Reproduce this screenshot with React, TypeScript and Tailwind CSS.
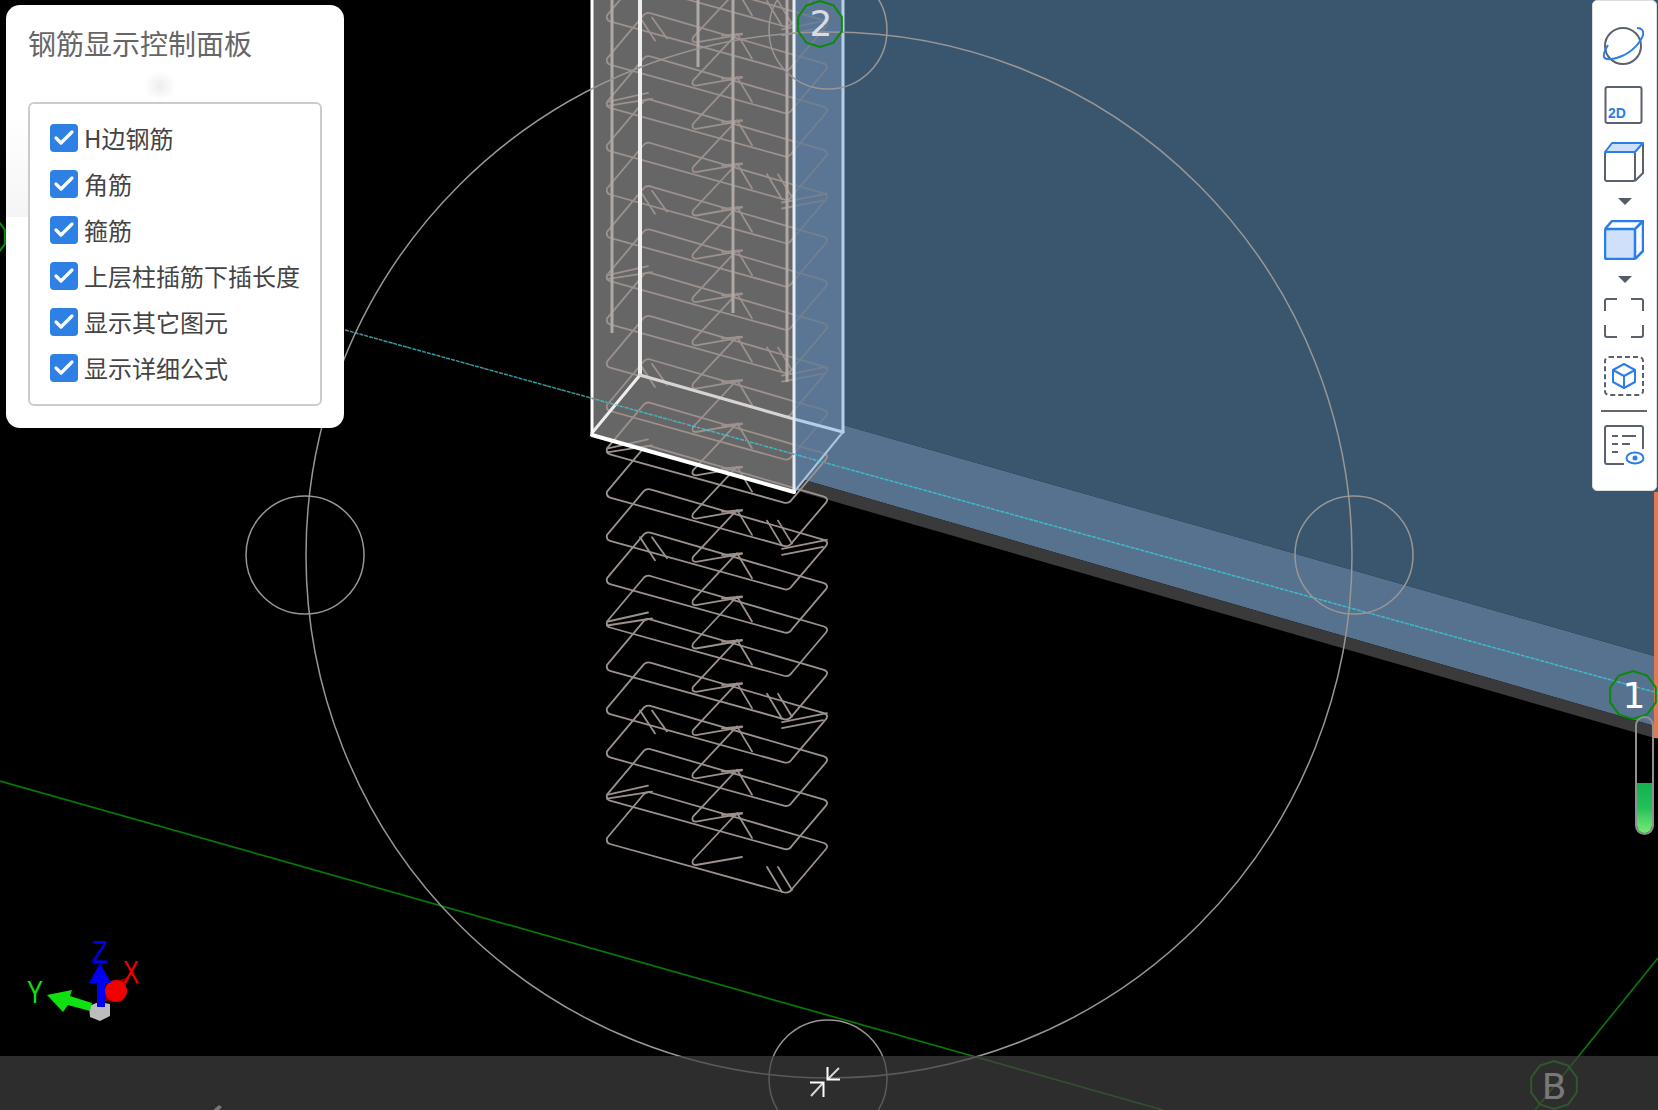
import { Check } from 'lucide-react';

const panelRows = ['H边钢筋', '角筋', '箍筋', '上层柱插筋下插长度', '显示其它图元', '显示详细公式'];

const GREY = '#5a6170';
const BLUE = '#2b7de9';
const HOOP_COLOR = '#9c918d';
const HOOP_PITCH = 43.3;

// hooks repeat every 4 hoops, counted from the bottom one
const hookPaths = [
  'M767 867L782 892M778 867L792 890',
  'M608 838L648 829M607 842L652 835',
  'M640 797L655 820M652 797L667 818',
  'M782 852L827 843M782 858L823 850',
];

const hoopIndexes = Array.from({ length: 22 }, (_, i) => i);

const decagon = (cx: number, cy: number, r: number) =>
  Array.from({ length: 10 }, (_, i) => {
    const a = (Math.PI / 5) * i - Math.PI / 2;
    return `${cx + r * Math.cos(a)},${cy + r * Math.sin(a)}`;
  }).join(' ');

const Hoop = ({ index }: { index: number }) => (
  <g transform={`translate(0 ${-HOOP_PITCH * index})`}>
    <path d="M607 838L644 794Q647 791 652 793L824 843Q829 845 826 849L792 889Q789 894 783 892L610 844Q606 843 607 838Z" />
    <path d="M742 857L696 865Q691 865 693 860L737 813L752 838M722 815L742 813" />
    <path d={hookPaths[index % 4]} />
  </g>
);

const Scene = () => (
  <svg className="absolute inset-0" width={1658} height={1110} viewBox="0 0 1658 1110" fill="none">
    {/* wall */}
    <polygon points="843,0 1658,0 1658,657 843,425" fill="#3a566f" />
    <polygon points="794,411 1658,657 1658,727 794,477" fill="#56728f" />
    <polygon points="794,477 1658,727 1658,739 794,490" fill="#3a3a3a" />
    <rect x={1654} y={492} width={4} height={246} fill="#e07b54" />

    {/* column */}
    <polygon points="592,0 794,0 794,492 592,433" fill="#666666" />
    <polygon points="794,0 843,0 843,432 794,492" fill="#5a7694" />

    <g stroke={HOOP_COLOR} strokeWidth={1.8} strokeLinejoin="round" strokeLinecap="round">
      {hoopIndexes.map((i) => (
        <Hoop key={i} index={i} />
      ))}
    </g>
    <g stroke="#b0a8a4" strokeWidth={3}>
      <line x1={612} y1={0} x2={612} y2={333} />
      <line x1={698} y1={0} x2={698} y2={67} />
      <line x1={733} y1={0} x2={733} y2={313} />
      <line x1={787} y1={0} x2={787} y2={382} />
    </g>
    <polygon points="794,0 843,0 843,432 794,492" fill="#5a7694" fillOpacity={0.65} />

    <g strokeLinecap="round">
      <line x1={640} y1={0} x2={640} y2={375} stroke="#eeeeee" strokeWidth={4} />
      <line x1={640} y1={375} x2={592} y2={433} stroke="#eeeeee" strokeWidth={3} />
      <line x1={640} y1={375} x2={794} y2={419} stroke="#d8d4d2" strokeWidth={3} />
      <line x1={794} y1={419} x2={843} y2={432} stroke="#b5cfe8" strokeWidth={3} />
      <line x1={843} y1={432} x2={794} y2={492} stroke="#a9c4de" strokeWidth={2} />
      <line x1={843} y1={0} x2={843} y2={432} stroke="#b5cfe8" strokeWidth={3} />
      <line x1={794} y1={0} x2={794} y2={492} stroke="#e4eef8" strokeWidth={3} />
      <line x1={592} y1={0} x2={592} y2={433} stroke="#ffffff" strokeWidth={3} />
      <line x1={592} y1={435} x2={794} y2={492} stroke="#ffffff" strokeWidth={4} />
    </g>

    {/* grid lines */}
    <line x1={345} y1={330} x2={1658} y2={693} stroke="#35d4dc" strokeWidth={1.5} strokeOpacity={0.75} strokeDasharray="4 1" />
    <line x1={345} y1={330} x2={843} y2={468} stroke="#d04050" strokeWidth={1.5} strokeDasharray="2 14" strokeOpacity={0.7} />
    <line x1={0} y1={781} x2={1163} y2={1110} stroke="#087808" strokeWidth={1.7} />
    <line x1={1658} y1={958} x2={1535} y2={1110} stroke="#087808" strokeWidth={1.7} />

    <g stroke="#9a9694" strokeWidth={1.5}>
      <circle cx={829} cy={555} r={523} />
      <circle cx={305} cy={555} r={59} />
      <circle cx={1354} cy={555} r={59} />
      <circle cx={828} cy={30} r={59} />
      <circle cx={828} cy={1079} r={59} />
    </g>

    {/* axis bubbles */}
    <g stroke="#0a8a0a" strokeWidth={2}>
      <polygon points={decagon(820, 24, 23)} />
      <polygon points={decagon(1633, 695, 24)} />
      <polygon points={decagon(1554, 1085, 24)} />
      <polygon points={decagon(-17, 237, 23)} />
    </g>
    <g fontFamily='"DejaVu Sans", sans-serif' fontSize={36} textAnchor="middle">
      <text x={821} y={36} fill="#d8dde4">2</text>
      <text x={1634} y={708} fill="#ffffff">1</text>
      <text x={1554} y={1099} fill="#ffffff">B</text>
    </g>

    {/* orientation gizmo */}
    <polygon points="89,1006 99,1002 110,1004 110,1016 100,1021 90,1017" fill="#bdbdbd" />
    <polygon points="128,977 106,985 105,1001 122,1000" fill="#8a0000" />
    <circle cx={116} cy={991} r={11} fill="#f00000" />
    <polygon points="47,995 72,990 70,996 92,1003 90,1011 68,1005 63,1012" fill="#10e010" />
    <polygon points="100,963 111,983 105,983 105,1007 97,1007 97,983 89,983" fill="#0000f0" />
    <g fontFamily='"Liberation Sans", sans-serif' fontSize={32}>
      <text x={92} y={963} fill="#0000f0" textLength={16} lengthAdjust="spacingAndGlyphs">Z</text>
      <text x={27} y={1003} fill="#10e010" textLength={16} lengthAdjust="spacingAndGlyphs">Y</text>
      <text x={123} y={983} fill="#f00000" textLength={16} lengthAdjust="spacingAndGlyphs">X</text>
    </g>
  </svg>
);

const OrbitIcon = () => (
  <svg width={40} height={40} viewBox="0 0 40 40" fill="none" className="overflow-visible">
    <circle cx={19} cy={20} r={18} stroke={GREY} strokeWidth={2} />
    <path d="M33 2C38 2 40 5 39 9C37 16 28 26 18 30C10 33 2 35 0 31C-1 28 1 24 4 19" stroke={BLUE} strokeWidth={2} />
  </svg>
);

const TwoDIcon = () => (
  <svg width={40} height={40} viewBox="0 0 40 40" fill="none">
    <rect x={1.5} y={2} width={36} height={36} rx={2} stroke={GREY} strokeWidth={2} />
    <text x={4} y={33} fill={BLUE} fontSize={14} fontWeight={700} fontFamily='"Liberation Sans", sans-serif'>2D</text>
  </svg>
);

const WireCubeIcon = () => (
  <svg width={40} height={40} viewBox="0 0 40 40" fill="none">
    <path d="M39 1V31L31 39" stroke={GREY} strokeWidth={2} />
    <rect x={1} y={10} width={30} height={29} rx={2} stroke={GREY} strokeWidth={2} />
    <polygon points="1,10 8,1 39,1 31,10" fill="#cfe0fa" stroke={BLUE} strokeWidth={2} strokeLinejoin="round" />
  </svg>
);

const SolidCubeIcon = () => (
  <svg width={40} height={40} viewBox="0 0 40 40" fill="none" stroke={BLUE} strokeWidth={2.5} strokeLinejoin="round">
    <rect x={1} y={9} width={30} height={30} rx={2} fill="#cfe0fa" />
    <path d="M1 9L8 1H39V31L31 39M31 9L39 1" />
  </svg>
);

const FrameIcon = () => (
  <svg width={40} height={40} viewBox="0 0 40 40" fill="none" stroke={GREY} strokeWidth={2}>
    <path d="M1 13V3Q1 1 3 1H13M27 1H37Q39 1 39 3V13M39 27V37Q39 39 37 39H27M13 39H3Q1 39 1 37V27" />
  </svg>
);

const DashedCubeIcon = () => (
  <svg width={40} height={40} viewBox="0 0 40 40" fill="none">
    <rect x={1} y={1} width={38} height={38} rx={4} stroke={GREY} strokeWidth={2} strokeDasharray="5 3" />
    <path d="M20 8L31 14V26L20 32L9 26V14ZM9 14L20 20L31 14M20 20V32" stroke={BLUE} strokeWidth={2} strokeLinejoin="round" />
  </svg>
);

const DocEyeIcon = () => (
  <svg width={40} height={40} viewBox="0 0 40 40" fill="none" className="overflow-visible">
    <path d="M20 39H3Q1 39 1 37V3Q1 1 3 1H37Q39 1 39 3V24" stroke={GREY} strokeWidth={2} />
    <path d="M8 11H14M18 11H32M8 19H14M18 19H26M8 27H14" stroke={GREY} strokeWidth={2} />
    <ellipse cx={31} cy={33} rx={8.5} ry={5.5} stroke={BLUE} strokeWidth={2} />
    <circle cx={31} cy={33} r={2.5} fill={BLUE} />
  </svg>
);

const Caret = ({ className }: { className: string }) => (
  <svg width={14} height={7} viewBox="0 0 14 7" className={className}>
    <polygon points="0,0 14,0 7,7" fill="#555b66" />
  </svg>
);

const Toolbar = () => (
  <div className="absolute top-0 left-[1592px] w-[65px] h-[491px] bg-white border border-[#dddddd] rounded-[5px] flex flex-col items-center pt-[25px] pr-[2px]">
    <OrbitIcon />
    <div className="mt-[19px]"><TwoDIcon /></div>
    <div className="mt-[17px]"><WireCubeIcon /></div>
    <Caret className="mt-[16px] ml-[2px]" />
    <div className="mt-[15px]"><SolidCubeIcon /></div>
    <Caret className="mt-[16px] ml-[2px]" />
    <div className="mt-[15px]"><FrameIcon /></div>
    <div className="mt-[18px]"><DashedCubeIcon /></div>
    <div className="mt-[14px] w-[46px] h-[2px] bg-[#666666]" />
    <div className="mt-[13px]"><DocEyeIcon /></div>
  </div>
);

const ControlPanel = () => (
  <div className="absolute left-[6px] top-[5px] w-[338px] h-[423px] bg-white rounded-[14px] px-[22px] pt-[20px] overflow-hidden">
    <div className="absolute left-[139px] top-[66px] w-[30px] h-[30px] bg-[radial-gradient(circle,#eeeeee,#ffffff_75%)]" />
    <div className="absolute left-0 top-[108px] w-[22px] h-[104px] bg-gradient-to-t from-[#f5f5f5] to-white" />
    <h2 className="relative text-[28px] leading-[36px] font-normal text-[#666666]">钢筋显示控制面板</h2>
    <div className="relative mt-[41px] h-[304px] border-2 border-[#cccccc] rounded-[6px] pl-[20px] pt-[20px] flex flex-col gap-[18px]">
      {panelRows.map((row) => (
        <label key={row} className="flex items-center gap-[6px] h-[28px]">
          <span className="flex items-center justify-center w-[28px] h-[28px] rounded-[4px] bg-[#2f80e4]">
            <Check size={24} strokeWidth={3.2} className="text-white shrink-0" />
          </span>
          <span className="text-[24px] leading-[28px] text-[#444444] whitespace-nowrap">{row}</span>
        </label>
      ))}
    </div>
  </div>
);

const BottomBar = () => (
  <div className="absolute left-0 right-0 top-[1056px] h-[54px] bg-[#404040]/70 flex items-start">
    <svg width={10} height={6} viewBox="0 0 10 6" className="ml-[212px] mt-[49px]">
      <polygon points="0,6 7,0 10,2 6,6" fill="#777777" />
    </svg>
    <svg width={30} height={30} viewBox="0 0 30 30" fill="none" stroke="#ffffff" className="ml-[588px] mt-[11px]">
      <path d="M17.5 0V12.5H30M0 15.5H13.5V30" strokeWidth={2} />
      <path d="M18 12L29 1M1 29L13 16" strokeWidth={2} strokeOpacity={0.8} />
    </svg>
  </div>
);

export default function App() {
  return (
    <div
      className="relative w-[1658px] h-[1110px] bg-black overflow-hidden"
      style={{ fontFamily: '"Noto Sans CJK SC", "Liberation Sans", sans-serif' }}
    >
      <Scene />
      <BottomBar />
      <ControlPanel />
      <Toolbar />
      <div className="absolute left-[1635px] top-[716px] w-[19px] h-[119px] rounded-full border-2 border-[#8f8f8f] overflow-hidden flex flex-col justify-end">
        <div className="h-[50px] bg-gradient-to-b from-[#16b050] via-[#22c05a] to-[#74ec78]" />
      </div>
    </div>
  );
}
